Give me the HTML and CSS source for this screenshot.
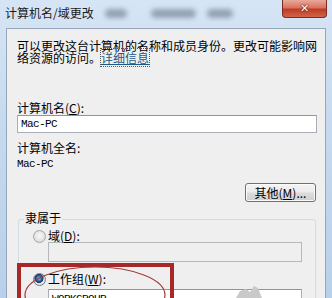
FILE: index.html
```html
<!DOCTYPE html>
<html lang="zh-CN">
<head>
<meta charset="utf-8">
<title>计算机名/域更改</title>
<link rel="stylesheet" href="styles.css">
</head>
<body>
<div class="window">
  <div class="titlebar">
    <span class="title">计算机名/域更改</span>
    <span class="blur b1"></span>
    <span class="blur b2"></span>
    <span class="blur b3"></span>
    <div class="close">✕</div>
  </div>
  <div class="client">
    <p class="desc">可以更改这台计算机的名称和成员身份。更改可能影响网<br>络资源的访问。<a class="link">详细信息</a></p>
    <div class="lbl l1">计算机名(<u>C</u>):</div>
    <div class="input i1"><span class="mono">Mac-PC</span></div>
    <div class="lbl l2">计算机全名:</div>
    <div class="mono full">Mac-PC</div>
    <div class="btnrow"><div class="btn">其他(<u>M</u>)...</div></div>
    <fieldset class="group">
      <legend>隶属于</legend>
      <div class="row r1"><span class="radio"></span><span>域(<u>D</u>):</span></div>
      <div class="input disabled"></div>
      <div class="row r2"><span class="radio on"></span><span>工作组(<u>W</u>):</span></div>
      <div class="input i3"><span class="mono">WORKGROUP</span></div>
    </fieldset>
  </div>
  <div class="mark-rect"></div>
  <svg class="mark-ellipse" width="332" height="40" viewBox="0 0 332 40">
    <ellipse cx="95" cy="37" rx="70" ry="28" fill="none" stroke="#a33a3a" stroke-width="1.2"/>
    <path d="M236 40 L240 33 L246 31 L250 34 L254 28 L258 30 L262 40 Z" fill="#c9c9c9"/>
  </svg>
</div>
</body>
</html>
```

FILE: styles.css
```css
html, body {
  margin: 0;
  padding: 0;
}
body {
  font-family: "Noto Sans CJK SC", "Noto Sans", sans-serif;
  font-size: 12px;
  color: #000;
}
.window {
  position: relative;
  width: 332px;
  height: 298px;
  overflow: hidden;
  background: linear-gradient(180deg, #d6e5f5 0%, #c6daef 40%, #b9d0ea 100%);
}
.titlebar {
  display: flex;
  align-items: flex-start;
  height: 28px;
  padding-left: 5px;
  box-sizing: border-box;
}
.title {
  margin-top: 6px;
  line-height: 14px;
  font-size: 12px;
  color: #1a1a1a;
}
.blur {
  margin-top: 9px;
  height: 9px;
  border-radius: 6px;
  background: #8391a3;
  filter: blur(2.5px);
  opacity: 0.8;
}
.b1 { margin-left: 11px; width: 22px; }
.b2 { margin-left: 24px; width: 45px; }
.b3 { margin-left: 11px; width: 26px; }
.close {
  margin-left: auto;
  margin-right: 5px;
  width: 45px;
  height: 18px;
  box-sizing: border-box;
  border: 1px solid #7a2c22;
  border-top: none;
  border-radius: 0 0 4px 4px;
  background: linear-gradient(180deg, #e9a99b 0%, #d9735e 45%, #c03c24 55%, #d1644c 100%);
  color: #fff;
  font-family: "DejaVu Sans", sans-serif;
  font-weight: bold;
  font-size: 11px;
  line-height: 17px;
  text-align: center;
  text-shadow: 0 0 2px #5a1a10, 0 0 1px #5a1a10;
}
.client {
  margin: 0 6px 0 6px;
  height: 280px;
  box-sizing: border-box;
  border: 1px solid #97a6b8;
  border-bottom: none;
  background: #efefef;
  padding: 0 9px 0 10px;
}
.desc {
  margin: 11px 0 0 0;
  line-height: 12px;
  white-space: nowrap;
}
.link {
  color: #1f5a86;
  text-decoration: underline;
  outline: 1px dotted #555;
  outline-offset: 0;
}
.lbl {
  line-height: 12px;
}
.l1 { margin-top: 38px; }
.l2 { margin-top: 9px; }
.input {
  height: 18px;
  box-sizing: border-box;
  border: 1px solid #a9aeb6;
  border-top-color: #8f959c;
  background: #fff;
  display: flex;
  align-items: center;
  padding-left: 3px;
}
.i1 { margin-top: 1px; margin-right: -1px; }
.mono {
  font-family: "Liberation Mono", "DejaVu Sans Mono", monospace;
  font-size: 11px;
  letter-spacing: -0.6px;
  line-height: 12px;
}
.full { margin-top: 4px; }
.btnrow {
  margin-top: 13px;
  display: flex;
  justify-content: flex-end;
}
.btn {
  width: 71px;
  height: 19px;
  box-sizing: border-box;
  border: 1px solid #707070;
  border-radius: 3px;
  background: linear-gradient(180deg, #f4f4f4 0%, #ebebeb 48%, #dcdcdc 52%, #cfcfcf 100%);
  box-shadow: inset 0 0 0 1px #fbfbfb;
  line-height: 17px;
  text-align: center;
}
.group {
  margin: 10px 0 0 1px;
  padding: 0 0 20px 5px;
  border: 1px solid #d3dbe2;
  border-radius: 3px;
  min-inline-size: 0;
}
.group legend {
  padding: 0 1px 3px 1px;
  line-height: 12px;
}
.row {
  display: flex;
  align-items: center;
  height: 12px;
  line-height: 12px;
  margin-left: 9px;
}
.r1 { margin-top: 3px; }
.r2 { margin-top: 11px; }
.radio {
  width: 13px;
  height: 13px;
  box-sizing: border-box;
  border-radius: 50%;
  border: 1px solid #a2a5a8;
  background: radial-gradient(circle at 50% 45%, #f8f8f8 0%, #e3e3e3 60%, #cfd0d1 100%);
  margin-right: 2px;
  flex: none;
}
.radio.on {
  border-color: #6f7d8c;
  background: radial-gradient(circle at 45% 40%, #9fc3e6 0%, #2f63a0 30%, #14345e 48%, #e8e8e8 54%, #d6d6d6 100%);
}
.group .input {
  margin-left: 24px;
  width: 254px;
  height: 20px;
}
.disabled {
  background: #efefef;
  border-color: #b4b8bc;
}
.i3 {
  margin-top: 4px;
  align-items: flex-start !important;
  padding-top: 3px;
}
.mark-rect {
  position: absolute;
  left: 17px;
  top: 263px;
  width: 157px;
  height: 60px;
  box-sizing: border-box;
  border: 4px solid #a8282a;
}
.mark-ellipse {
  position: absolute;
  left: 0;
  top: 258px;
}
```
